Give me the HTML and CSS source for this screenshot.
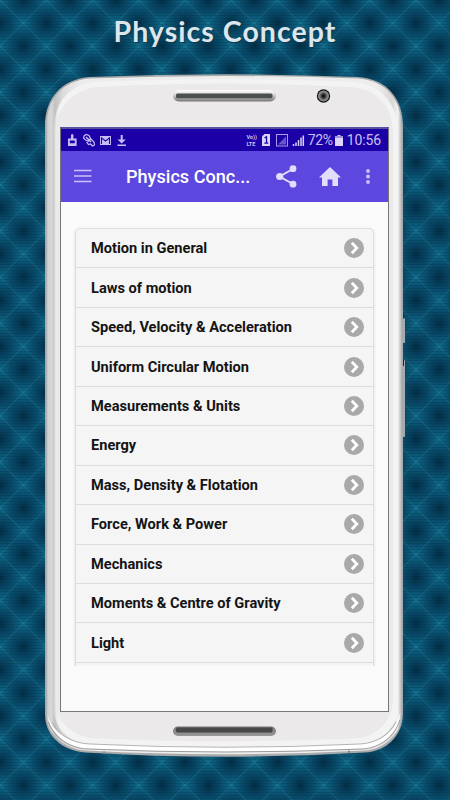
FILE: index.html
```
<!DOCTYPE html>
<html lang="en">
<head>
<meta charset="utf-8">
<title>Physics Concept</title>
<link rel="stylesheet" href="styles.css">
</head>
<body>
<svg class="backdrop" viewBox="0 0 450 800" width="450" height="800" aria-hidden="true">
  <defs>
    <radialGradient id="glow"><stop offset="0" stop-color="#10708f" stop-opacity=".85"/><stop offset=".4" stop-color="#0c6080" stop-opacity=".5"/><stop offset="1" stop-color="#0a5070" stop-opacity="0"/></radialGradient>
    <radialGradient id="shade"><stop offset="0" stop-color="#02293f" stop-opacity=".9"/><stop offset=".4" stop-color="#03324b" stop-opacity=".6"/><stop offset="1" stop-color="#063b58" stop-opacity="0"/></radialGradient>
    <pattern id="plaid" x=".2" y="0" width="46.2" height="46.2" patternUnits="userSpaceOnUse">
      <rect width="47" height="47" fill="#094e6d"/>
      <g fill="url(#glow)"><circle r="17"/><circle cx="46.2" r="17"/><circle cy="46.2" r="17"/><circle cx="46.2" cy="46.2" r="17"/><circle cx="23.1" cy="23.1" r="17"/></g>
      <g fill="url(#shade)"><circle cx="23.1" r="16"/><circle cy="23.1" r="16"/><circle cx="46.2" cy="23.1" r="16"/><circle cx="23.1" cy="46.2" r="16"/></g>
      <path d="M0 0L46.2 46.2M46.2 0L0 46.2" stroke="#4da8ac" stroke-opacity=".38" stroke-width=".7"/>
    </pattern>
    <pattern id="threads" width="4" height="3" patternUnits="userSpaceOnUse"><path d="M0 .5H4" stroke="#022a40" stroke-opacity=".2"/></pattern>
    <linearGradient id="shell" x1="45" x2="403" y1="0" y2="0" gradientUnits="userSpaceOnUse">
      <stop offset="0" stop-color="#929495"/><stop offset=".008" stop-color="#d0d0d0"/><stop offset=".018" stop-color="#d8d8d8"/><stop offset=".028" stop-color="#c2c1c1"/><stop offset=".05" stop-color="#dcdcdc"/><stop offset=".1" stop-color="#eeeded"/><stop offset=".93" stop-color="#ededed"/><stop offset=".97" stop-color="#d9d6d6"/><stop offset=".985" stop-color="#f3f3f3"/><stop offset="1" stop-color="#9ba0a2"/>
    </linearGradient>
    <linearGradient id="slot" x1="0" x2="0" y1="0" y2="1"><stop offset="0" stop-color="#fff"/><stop offset=".35" stop-color="#ddd"/><stop offset="1" stop-color="#777"/></linearGradient>
    <linearGradient id="slotlow" x1="0" x2="0" y1="0" y2="1"><stop offset="0" stop-color="#777"/><stop offset="1" stop-color="#999"/></linearGradient>
    <linearGradient id="leftedge" x1="54" x2="60" y1="0" y2="0" gradientUnits="userSpaceOnUse"><stop offset="0" stop-color="#d2d1d1"/><stop offset=".5" stop-color="#eeeded"/><stop offset="1" stop-color="#f4f3f3"/></linearGradient>
    <radialGradient id="lens"><stop offset="0" stop-color="#000"/><stop offset=".2" stop-color="#222"/><stop offset=".65" stop-color="#8d8d8d"/><stop offset=".78" stop-color="#777"/><stop offset=".86" stop-color="#111"/><stop offset="1" stop-color="#222"/></radialGradient>
  </defs>
  <rect width="450" height="800" fill="url(#plaid)"/>
  <rect width="450" height="800" fill="url(#threads)"/>
  <path d="M402 318h2.2q.8 0 .8 1v23q0 1-.8 1H402zM402 360h2.2q.8 0 .8 1v75q0 1-.8 1H402z" fill="#a4abad"/>
  <path d="M403 315v4M403.500 360v6" stroke="#17252b"/>
  <path d="M45 126C45 99 61 79 90 77Q225 71.500 357 77C389 78.500 403 101 403 126V713C403 737 385 751.500 365 752.500Q225 761 85 752.500C64 751 45 737 45 714Z" fill="#a9aaab"/>
  <path d="M46.500 126C46.500 100 62 80.500 90 78.500Q225 73.500 357 78.500C387 80 401.500 101 401.500 126V713C401.500 736 383 749.500 364 750.500Q225 758 86 750.500C66 749 46.500 736 46.500 714Z" fill="url(#shell)"/>
  <path d="M47.500 714C49 733 68 747.500 88 748.500Q225 754.500 362 748.500C382 747.500 399 733 400.500 712C396 731 380 743.500 362 744Q225 750.500 88 744C68 743 51 731 47.500 714Z" fill="#fff"/>
  <path d="M48.500 722C54 738 70 748.500 88 749Q225 755 362 749C380 748.500 395 736 400 720" fill="none" stroke="#858585" stroke-width=".8"/>
  <path d="M54 131C54 100 71 84 96 82Q225 76 352 82C379 83 398 103 398 131V709C397 729 378 743 360 743.500Q225 750 90 743.500C70 743 54 729 54 709Z" fill="url(#leftedge)"/>
  <path d="M52 722C59 736 74 743.500 90 744Q225 750.500 360 744C375 743.500 390 735 396 722" fill="none" stroke="#a5a5a5" stroke-width=".8"/>
  <path d="M55.500 132C56 106 75 89 98 87Q225 80 350 87C377 88 393 108 393 132V702C391 724 374 738 355 738.500Q225 744 96 738.500C76 738 56 724 55.500 702Z" fill="#ebe9ea"/>
  <rect x="173" y="90" width="103" height="11.500" rx="5.700" fill="url(#slot)"/><rect x="176" y="93.500" width="96.500" height="4.800" rx="1.500" fill="#4d504f"/>
  <rect x="173" y="726.500" width="103" height="9.500" rx="4.700" fill="url(#slotlow)"/><rect x="176" y="727.500" width="96.500" height="5" rx="1.500" fill="#484848"/>
  <circle cx="323.500" cy="96" r="6.700" fill="url(#lens)"/>
  <path d="M104 751.500v2.500M349 750.500v2.500" stroke="#8c8c8c" stroke-width="2"/>
</svg>

<main class="stage">
  <h1 class="headline">Physics Concept</h1>
  <section class="screen">
    <div class="status">
      <svg class="status-left" viewBox="0 0 62 14" width="62" height="14" fill="#c8bdf5">
        <path d="M1 5.500h3V2q1.200-1.800 2.400 0v3.500h3.200V13H1zM2.800 7.500v2.700h5V7.500z" fill-rule="evenodd"/>
        <g fill="none" stroke="#c8bdf5" stroke-width="1.200"><path d="M17 3l2-1.500 3 1 1.500 3-2 2.500-3-1-2-2zM22.500 7l1.500-1 3 3 .5 3-2 1-2-2-2 .5-1.500-2z"/><path d="M19 4l5 5" stroke-width="1.500"/></g>
        <path d="M33 3h11v9H33z"/><path d="M34.500 11V4.800L38.500 8l4-3.200V11" fill="none" stroke="#1b06a5" stroke-width="1.100"/>
        <path d="M53.700 2h2v4.500h3L54.700 10.500 50.500 6.500h3.200zM50.500 11.500h8.500V13h-8.500z"/>
      </svg>
      <span class="volte"><span>Vo))</span><span>LTE</span></span>
      <svg class="status-signal" viewBox="0 0 44 14" width="44" height="14">
        <path d="M3.500 1H9v12H1V3.500z" fill="#dcd5fa"/><path d="M3.500 5l2-1.300V10M3.300 10.200h4" fill="none" stroke="#1b06a5" stroke-width="1.300"/>
        <rect x="15.500" y="1.500" width="11" height="11.500" fill="none" stroke="#a99be6"/><path d="M17 11.500l8-8v8z" fill="#6956cd"/>
        <path d="M32.500 13v-2M35 13V9.500M37.500 13V7M40 13V4.500M42.300 13V2.500" stroke="#d8d0f8" stroke-width="1.500"/>
      </svg>
      <span class="percent">72%</span>
      <svg class="battery" viewBox="0 0 8 12" width="8" height="12"><path d="M2.500 1h3v1H8v10H0V2h2.500z" fill="#ddd6fa"/><path d="M0 2h8v2H0z" fill="#a092df"/></svg>
      <span class="clock">10:56</span>
    </div>
    <header class="bar">
      <svg class="burger" viewBox="0 0 18 14" width="18" height="14"><path d="M0 1.500h17.500M0 7h17.500M0 12.500h17.500" stroke="#c9c0f8" stroke-width="1.600"/></svg>
      <h2 class="bar-title">Physics Conc...</h2>
      <svg class="share" viewBox="0 0 21 23" width="21" height="23" fill="#e3ddfc"><path d="M17 4L3.500 11.500 17 19" fill="none" stroke="#e3ddfc" stroke-width="2"/><circle cx="17" cy="3.700" r="3.400"/><circle cx="3.700" cy="11.500" r="3.600"/><circle cx="17" cy="19.200" r="3.400"/></svg>
      <svg class="home" viewBox="0 0 22 19" width="22" height="19"><path d="M11 0l11 10.500h-3V19h-5.600v-6.500H8.600V19H3v-8.500H0z" fill="#e3ddfc"/></svg>
      <svg class="more" viewBox="0 0 4 15" width="4" height="15" fill="#cdc4fa"><circle cx="2" cy="2" r="1.900"/><circle cx="2" cy="7.500" r="1.900"/><circle cx="2" cy="13" r="1.900"/></svg>
    </header>
    <svg class="symbols" aria-hidden="true"><symbol id="next" viewBox="0 0 20 20"><circle cx="10" cy="10" r="10" fill="#a9a9a9"/><path d="M7.800 4.800l5 5.200-5 5.200" fill="none" stroke="#fff" stroke-width="2.800"/></symbol></svg>
    <div class="viewport">
      <ul class="topics">
        <li><span>Motion in General</span><svg><use href="#next"/></svg></li>
        <li><span>Laws of motion</span><svg><use href="#next"/></svg></li>
        <li><span>Speed, Velocity &amp; Acceleration</span><svg><use href="#next"/></svg></li>
        <li><span>Uniform Circular Motion</span><svg><use href="#next"/></svg></li>
        <li><span>Measurements &amp; Units</span><svg><use href="#next"/></svg></li>
        <li><span>Energy</span><svg><use href="#next"/></svg></li>
        <li><span>Mass, Density &amp; Flotation</span><svg><use href="#next"/></svg></li>
        <li><span>Force, Work &amp; Power</span><svg><use href="#next"/></svg></li>
        <li><span>Mechanics</span><svg><use href="#next"/></svg></li>
        <li><span>Moments &amp; Centre of Gravity</span><svg><use href="#next"/></svg></li>
        <li><span>Light</span><svg><use href="#next"/></svg></li>
      </ul>
    </div>
  </section>
</main>
</body>
</html>
```
FILE: styles.css
```
* { box-sizing: border-box; }
body { margin: 0; width: 450px; height: 800px; overflow: hidden; font-family: Roboto, "Liberation Sans", sans-serif; background: #094b69; }
.backdrop { position: absolute; top: 0; left: 0; z-index: -1; }
.stage { display: flex; flex-direction: column; height: 800px; }
.headline { margin: 0; height: 127px; padding-top: 14px; text-align: center; font: 700 28.5px/34px Lato, sans-serif; letter-spacing: 1.050px; color: #dce6ed; text-shadow: 1px 1px 1px #12384d; white-space: nowrap; }
.screen { width: 329px; height: 585px; margin-left: 60px; background: #fafafa; border: 1px solid #777; border-top: 2px solid #55519b; overflow: hidden; }
.status { display: flex; align-items: center; height: 22px; padding: 0 7px 0 6px; background: #1b00a8; color: #c9c1f1; }
.status-left { flex: none; }
.volte { display: flex; flex-direction: column; gap: 1px; margin-left: auto; font-size: 5.5px; line-height: 6px; font-weight: 700; }
.status-signal { margin-left: 4px; flex: none; }
.percent { margin-left: 3px; font-size: 14px; letter-spacing: -.4px; }
.battery { margin: 0 4px 0 2px; flex: none; }
.clock { font-size: 14px; letter-spacing: -.1px; }
.bar { display: flex; align-items: center; height: 51px; padding: 0 18px 0 13px; background: #5d48df; }
.burger { flex: none; margin-top: -2px; }
.bar-title { margin: 1px 0 0 34px; width: 126px; font-size: 18.1px; line-height: 24px; font-weight: 500; color: #fff; white-space: nowrap; }
.share { margin-left: 24px; flex: none; }
.home { margin-left: 22px; flex: none; }
.more { margin-left: auto; flex: none; }
.symbols { display: none; }
.viewport { height: 464px; padding: 26px 14px 0; overflow: hidden; }
.topics { height: 460px; margin: 0; padding: 0; list-style: none; border: 1px solid #dedede; border-radius: 5px; background: #f5f5f5; box-shadow: 0 1px 3px rgba(0,0,0,.12); }
.topics li { display: flex; align-items: center; justify-content: space-between; height: 39.45px; padding: 0 9px 0 15px; border-bottom: 1px solid #dcdcdc; font-size: 14.6px; font-weight: 700; color: #141414; white-space: nowrap; }
.topics svg { width: 20px; height: 20px; }
```
